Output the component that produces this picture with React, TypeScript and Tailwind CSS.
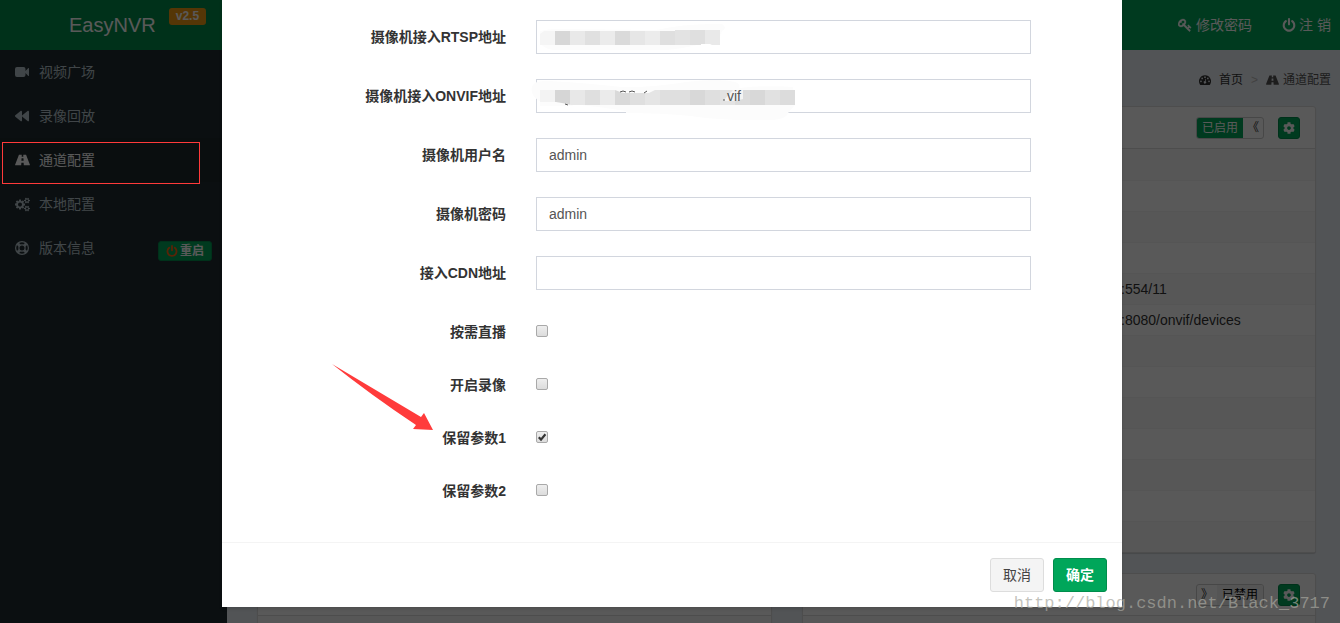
import type { ReactNode } from "react";
import { FaBackward, FaCog } from "react-icons/fa";

function Glyph({ className, box, children }: { className: string; box: string; children: ReactNode }) {
  return (
    <svg viewBox={box} fill="currentColor" className={className} aria-hidden="true">
      {children}
    </svg>
  );
}

function KeyIcon({ className }: { className: string }) {
  return (
    <Glyph className={className} box="0 0 1792 1792">
      <path
        stroke="currentColor"
        strokeWidth="40"
        d="M832 512q0-80-56-136t-136-56-136 56-56 136q0 42 19 83-41-19-83-19-80 0-136 56t-56 136 56 136 136 56 136-56 56-136q0-42-19-83 41 19 83 19 80 0 136-56t56-136zm851 704q0 17-49 66t-66 49q-9 0-28.5-16t-36.5-33-38.5-40-24.5-26l-96 96 220 220q28 28 28 68 0 42-39 81t-81 39q-40 0-68-28l-671-671q-176 131-365 131-163 0-265.5-102.5t-102.5-265.5q0-160 95-313t248-248 313-95q163 0 265.5 102.5t102.5 265.5q0 189-131 365l355 355 96-96q-3-3-26-24.5t-40-38.5-33-36.5-16-28.5q0-17 49-66t66-49q13 0 23 10 6 6 46 44.5t82 79.5 86.5 86 73 78 28.5 41z"
      />
    </Glyph>
  );
}

function PowerIcon({ className }: { className: string }) {
  return (
    <Glyph className={className} box="128 0 1536 1700">
      <path d="M1664 896q0 156-61 298t-164 245-245 164-298 61-298-61-245-164-164-245-61-298q0-182 80.5-343t226.5-270q43-32 95.5-25t83.5 50q32 42 24.5 94.500t-49.5 84.500q-98 74-151.5 181t-53.5 228q0 104 40.5 198.500t109.500 163.500 163.500 109.500 198.500 40.500 198.500-40.500 163.500-109.500 109.500-163.500 40.500-198.500q0-121-53.500-228t-151.500-181q-42-32-49.500-84.500t24.500-94.500q31-43 84-50t95 25q146 109 226.500 270t80.500 343zm-640-768v640q0 52-38 90t-90 38-90-38-38-90v-640q0-52 38-90t90-38 90 38 38 90z" />
    </Glyph>
  );
}

function CogsIcon({ className }: { className: string }) {
  return (
    <Glyph className={className} box="0 0 1920 1792">
      <path d="M896 896q0-106-75-181t-181-75-181 75-75 181 75 181 181 75 181-75 75-181zm768 512q0-52-38-90t-90-38-90 38-38 90q0 53 37.5 90.5t90.5 37.5 90.5-37.5 37.5-90.5zm0-1024q0-52-38-90t-90-38-90 38-38 90q0 53 37.5 90.5t90.5 37.5 90.5-37.5 37.5-90.5zm-384 421v185q0 10-7 19.5t-16 10.5l-155 24q-11 35-32 76 34 48 90 115 7 11 7 20 0 12-7 19-23 30-82.5 89.5t-78.5 59.5q-11 0-21-7l-115-90q-37 19-77 31-11 108-23 155-7 24-30 24h-186q-11 0-20-7.5t-10-17.5l-23-153q-34-10-75-31l-118 89q-7 7-20 7-11 0-21-8-144-133-144-160 0-9 7-19 10-14 41-53t47-61q-23-44-35-82l-152-24q-10-1-17-9.5t-7-19.5v-185q0-10 7-19.5t16-10.5l155-24q11-35 32-76-34-48-90-115-7-11-7-20 0-12 7-20 22-30 82-89t79-59q11 0 21 7l115 90q34-18 77-32 11-108 23-154 7-24 30-24h186q11 0 20 7.5t10 17.5l23 153q34 10 75 31l118-89q8-7 20-7 11 0 21 8 144 133 144 160 0 8-7 19-12 16-42 54t-45 60q23 48 34 82l152 23q10 2 17 10.5t7 19.5zm640 533v140q0 16-149 31-12 27-30 52 51 113 51 138 0 4-4 7-122 71-124 71-8 0-46-47t-52-68q-20 2-30 2t-30-2q-14 21-52 68t-46 47q-2 0-124-71-4-3-4-7 0-25 51-138-18-25-30-52-149-15-149-31v-140q0-16 149-31 13-29 30-52-51-113-51-138 0-4 4-7 4-2 35-20t59-34 30-16q8 0 46 46.5t52 67.5q20-2 30-2t30 2q51-71 92-112l6-2q4 0 124 70 4 3 4 7 0 25-51 138 17 23 30 52 149 15 149 31zm0-1024v140q0 16-149 31-12 27-30 52 51 113 51 138 0 4-4 7-122 71-124 71-8 0-46-47t-52-68q-20 2-30 2t-30-2q-14 21-52 68t-46 47q-2 0-124-71-4-3-4-7 0-25 51-138-18-25-30-52-149-15-149-31v-140q0-16 149-31 13-29 30-52-51-113-51-138 0-4 4-7 4-2 35-20t59-34 30-16q8 0 46 46.5t52 67.5q20-2 30-2t30 2q51-71 92-112l6-2q4 0 124 70 4 3 4 7 0 25-51 138 17 23 30 52 149 15 149 31z" />
    </Glyph>
  );
}

function VideoIcon({ className }: { className: string }) {
  return (
    <Glyph className={className} box="0 0 14 14">
      <path d="M2 2h6.500q2 0 2 2v2L13.300 3q.7-.3.7.4v7.200q0 .7-.7.4L10.500 8v2q0 2-2 2H2q-2 0-2-2V4q0-2 2-2z" />
    </Glyph>
  );
}

function RoadIcon({ className }: { className: string }) {
  return (
    <Glyph className={className} box="0 0 16 14">
      <path fillRule="evenodd" d="M4.200 1.500H7.200L7.100 3.500H8.900L8.800 1.500H11.800L15.900 12q.2.700-.5.700H9.400L9.200 9.800H6.800L6.600 12.700H.6q-.7 0-.5-.7zM7 5L6.800 7.800H9.200L9 5z" />
    </Glyph>
  );
}

function LifeRingIcon({ className }: { className: string }) {
  return (
    <svg viewBox="0 0 14 14" fill="none" stroke="currentColor" className={className} aria-hidden="true">
      <circle cx="7" cy="7" r="6.400" strokeWidth="1.200" />
      <circle cx="7" cy="7" r="3.100" strokeWidth="1.200" />
      <path strokeWidth="3" d="M2.300 2.300L4.700 4.700M11.700 2.300L9.300 4.700M2.300 11.700L4.700 9.300M11.700 11.700L9.300 9.300" />
    </svg>
  );
}

function DashboardIcon({ className }: { className: string }) {
  return (
    <svg viewBox="0 0 14 14" className={className} aria-hidden="true">
      <path fill="currentColor" d="M7 1.500A7 7 0 0 0 1.200 12.400Q1.400 12.700 1.800 12.700H12.200Q12.600 12.700 12.800 12.400A7 7 0 0 0 7 1.500z" />
      <g fill="#ecf0f5">
        <circle cx="2.300" cy="8.500" r="1" />
        <circle cx="3.700" cy="5.200" r="1" />
        <circle cx="7" cy="3.700" r="1" />
        <circle cx="10.300" cy="5.200" r="1" />
        <circle cx="11.700" cy="8.500" r="1" />
        <path d="M7.600 5.500L8.300 5.700L7.700 8.500A1.500 1.500 0 1 1 6.900 8.300z" />
      </g>
    </svg>
  );
}

const menu: { label: string; icon: ReactNode; active?: boolean; restart?: boolean }[] = [
  { label: "视频广场", icon: <VideoIcon className="size-[14px]" /> },
  { label: "录像回放", icon: <FaBackward className="size-[14px]" /> },
  { label: "通道配置", icon: <RoadIcon className="h-[14px] w-[15px]" />, active: true },
  { label: "本地配置", icon: <CogsIcon className="size-[15px]" /> },
  { label: "版本信息", icon: <LifeRingIcon className="size-[14px]" />, restart: true },
];

function Sidebar() {
  return (
    <aside className="w-[227px] shrink-0 bg-[#222d32]">
      <div className="flex h-[50px] items-start bg-[#008d4c] pl-[69px] text-white">
        <span className="text-[20px] leading-[50px]">EasyNVR</span>
        <span className="mt-2 ml-[13px] rounded-[3px] bg-[#f39c12] px-[7px] text-[12px] leading-[17px] font-bold">v2.5</span>
      </div>
      <nav>
        <ul>
          {menu.map((item) => (
            <li
              key={item.label}
              className={`flex h-11 items-center justify-between pr-[15px] ${item.active ? "bg-[#1e282c] text-white" : "text-[#b8c7ce]"}`}
            >
              <a href="#" className="flex h-11 items-center pl-[15px] text-[14px]">
                <span className="w-6">{item.icon}</span>
                {item.label}
              </a>
              {item.restart && (
                <button className="mt-[5px] flex h-5 items-center gap-[2px] rounded-[3px] border border-[#008d4c] bg-[#00a65a] px-[7px] text-[12px] font-bold text-white">
                  <PowerIcon className="size-[12px] text-[#ff6414]" />
                  重启
                </button>
              )}
            </li>
          ))}
        </ul>
      </nav>
    </aside>
  );
}

function ChannelCard({ enabled, rows }: { enabled: boolean; rows: string[] }) {
  return (
    <section className="rounded-[3px] border border-[#ddd] bg-white shadow-[0_1px_1px_rgba(0,0,0,0.15)]">
      <div className="flex h-[42px] items-center justify-end gap-[14px] border-b border-[#ddd] pr-[15px]">
        {enabled ? (
          <button className="flex h-[22px] w-[68px] overflow-hidden rounded-[3px] border border-[#ccc] text-[12px] leading-5">
            <span className="w-[46px] shrink-0 bg-[#00a65a] text-center text-white">已启用</span>
            <span className="w-5 text-center text-[#333]">《</span>
          </button>
        ) : (
          <button className="flex h-[22px] w-[68px] overflow-hidden rounded-[3px] border border-[#ccc] text-[12px] leading-5">
            <span className="w-5 shrink-0 text-center text-[#333]">》</span>
            <span className="w-[46px] shrink-0 bg-[#f4f4f4] text-center text-black">已禁用</span>
          </button>
        )}
        <button aria-label="设置" className="flex size-[22px] items-center justify-center rounded-[3px] border border-[#008d4c] bg-[#00a65a] text-white">
          <FaCog className="size-[12px]" />
        </button>
      </div>
      <table className="w-full">
        <tbody>
          {rows.map((row, i) => (
            <tr key={i} className="h-[31px] border-b border-[#f4f4f4] last:border-0 odd:bg-[#f9f9f9]">
              <td />
              <td className="w-[194px] text-[14px] leading-5 text-[#333]">{row}</td>
            </tr>
          ))}
        </tbody>
      </table>
    </section>
  );
}

const blank = Array<string>(13).fill("");
const details = blank.map((text, i) => (i === 4 ? ":554/11" : i === 5 ? ":8080/onvif/devices" : text));

function Page() {
  return (
    <div className="flex min-h-screen">
      <Sidebar />
      <div className="min-w-0 flex-1 bg-[#ecf0f5]">
        <header className="flex h-[50px] items-center justify-end gap-[30px] bg-[#00a65a] pr-[9px] text-[14px] text-white">
          <a href="#" className="flex items-center gap-1">
            <KeyIcon className="size-[14px]" />
            修改密码
          </a>
          <a href="#" className="flex items-center gap-[3px]">
            <PowerIcon className="size-[14px]" />
            注 销
          </a>
        </header>
        <nav className="flex h-14 items-center justify-end pt-1 pr-[9px] text-[12px] text-[#333]">
          <a href="#" className="flex items-center gap-2">
            <DashboardIcon className="size-[12px]" />
            首页
          </a>
          <span className="px-2 text-[#bbb]">&gt;</span>
          <a href="#" className="flex items-center gap-1 text-[#555]">
            <RoadIcon className="h-[12px] w-[13px]" />
            通道配置
          </a>
        </nav>
        <main className="grid grid-cols-2 gap-x-[30px] gap-y-5 pr-6 pl-[30px]">
          <ChannelCard enabled rows={blank} />
          <ChannelCard enabled rows={details} />
          <ChannelCard enabled={false} rows={blank} />
          <ChannelCard enabled={false} rows={blank} />
        </main>
      </div>
    </div>
  );
}

const maskA = ["#f5f5f5", "#d7d7d7", "#e9e9e9", "#e0e0e0", "#ebebeb", "#dadada", "#e6e6e6", "#ececec", "#dfdfdf", "#e3e3e3", "#dfdfdf", "#e9e9e9"];
const maskB = ["#f3f3f3", "#d6d6d6", "#e8e8e8", "#dfdfdf", "#ebebeb", "#d9d9d9", "#dfdfdf", "#e5e5e5", "#dfdfdf", "#dfdfdf", "#d8d8d8", "#dfdfdf", "#e3e3e3", "#dcdcdc", "#d8d8d8", "#e1e1e1", "#dcdcdc"];

function RtspMask() {
  return (
    <svg width="200" height="34" className="pointer-events-none absolute top-0 left-0" aria-hidden="true">
      <path d="M4 12Q5 10 18 9L120 10Q150 3 186 4Q192 8 186 11L180 24H165Q145 29 130 30L18 30Q4 28 4 20Z" fill="#fcfcfc" />
      {maskA.map((c, i) => (
        <rect key={i} x={4 + i * 15} y={i > 8 ? 10 : 11} width="15" height={i > 8 ? 15 : 14} fill={c} />
      ))}
      <path d="M4 11h4l-4 3z" fill="#fcfcfc" />
      <path d="M165 25v-1h9l2 1z" fill="#fff" />
    </svg>
  );
}

function OnvifMask() {
  return (
    <svg width="276" height="46" className="pointer-events-none absolute top-0 -left-[5px]" aria-hidden="true">
      <path d="M1 8Q2 2 14 2Q45 3 90 8Q120 9 155 3Q188 -1 204 3Q210 5 208 9Q240 6 262 8L264 26L257 34Q256 40 240 41Q190 42 160 37Q130 34 95 34V32Q70 28 50 26L8 22Q-1 16 1 8Z" fill="#fcfcfc" />
      {maskB.map((c, i) => (
        <rect key={i} x={9 + i * 15} y="11" width="15" height="15" fill={c} />
      ))}
      <path d="M9 23L25 23Q38 25 43 27H9Z" fill="#fcfcfc" />
      <path d="M84 11H124L118 14H92Z" fill="#fcfcfc" />
      <path d="M89 13q3-2 6 0M98 13q3-2 6 0M113 14l3-2M34 25l3 1" fill="none" stroke="#555" />
      <path d="M192 22L202 11H212V20L204 22Z" fill="#f4f4f4" />
      <text x="196" y="22" fontSize="14" fill="#555">vif</text>
      <path d="M192 21h2" stroke="#555" />
    </svg>
  );
}

const fields: { id: string; label: string; value: string; mask?: ReactNode }[] = [
  { id: "rtsp", label: "摄像机接入RTSP地址", value: "", mask: <RtspMask /> },
  { id: "onvif", label: "摄像机接入ONVIF地址", value: "", mask: <OnvifMask /> },
  { id: "user", label: "摄像机用户名", value: "admin" },
  { id: "password", label: "摄像机密码", value: "admin" },
  { id: "cdn", label: "接入CDN地址", value: "" },
];

const options = [
  { id: "live", label: "按需直播", checked: false },
  { id: "record", label: "开启录像", checked: false },
  { id: "reserve1", label: "保留参数1", checked: true },
  { id: "reserve2", label: "保留参数2", checked: false },
];

function ChannelDialog() {
  return (
    <form role="dialog" className="w-[900px] max-w-full bg-white shadow-[0_2px_3px_rgba(0,0,0,0.125)]" onSubmit={(e) => e.preventDefault()}>
      <div className="flex flex-col gap-[25px] pt-5 pb-10">
        {fields.map((f) => (
          <div key={f.id} className="grid grid-cols-12">
            <label htmlFor={f.id} className="col-span-4 pt-[7px] pr-4 text-right text-[14px] leading-5 font-bold text-[#333]">
              {f.label}
            </label>
            <div className="col-span-7 pr-4 pl-[14px]">
              <div className="relative">
                <input
                  id={f.id}
                  type="text"
                  defaultValue={f.value}
                  className="block h-[34px] w-full border border-[#d2d6de] bg-white px-3 text-[14px] text-[#555] outline-none"
                />
                {f.mask}
              </div>
            </div>
          </div>
        ))}
        {options.map((o) => (
          <div key={o.id} className="grid h-7 grid-cols-12">
            <label htmlFor={o.id} className="col-span-4 pt-[7px] pr-4 text-right text-[14px] leading-5 font-bold text-[#333]">
              {o.label}
            </label>
            <div className="col-span-7 pt-[10px] pl-[14px]">
              <div className="relative size-[12px]">
                <input
                  id={o.id}
                  type="checkbox"
                  defaultChecked={o.checked}
                  className="peer block size-[12px] appearance-none rounded-[2px] border border-[#a9a9a9] bg-linear-to-b from-[#eee] to-[#dcdcdc]"
                />
                <svg viewBox="0 0 12 12" className="pointer-events-none absolute inset-0 hidden size-[12px] peer-checked:block" aria-hidden="true">
                  <path d="M2.8 6.2L5 8.6L9.4 3.2" fill="none" stroke="#333" strokeWidth="2.2" />
                </svg>
              </div>
            </div>
          </div>
        ))}
      </div>
      <div className="flex justify-end gap-[9px] border-t border-[#f4f4f4] p-[15px] text-[14px]">
        <button type="button" className="h-[34px] rounded-[3px] border border-[#ddd] bg-[#f4f4f4] px-3 text-[#444]">取消</button>
        <button type="submit" className="h-[34px] rounded-[3px] border border-[#008d4c] bg-[#00a65a] px-3 font-bold text-white">确定</button>
      </div>
    </form>
  );
}

export default function App() {
  return (
    <div className="relative h-screen overflow-hidden font-['Liberation_Sans','Noto_Sans_CJK_SC',sans-serif]">
      <Page />
      <div className="absolute inset-0 flex items-start justify-center bg-black/65 pl-1">
        <ChannelDialog />
      </div>
      <div className="pointer-events-none absolute top-[142px] left-[2px] h-[42px] w-[198px] border border-[#ff3a3a]" />
      <svg width="104" height="68" className="pointer-events-none absolute top-[363px] left-[331px]" aria-hidden="true">
        <path d="M1 1L90 54L93 50L102 67L82 66L85 62Q40 32 1 1Z" fill="#ff3b3b" />
      </svg>
      <p className="pointer-events-none absolute right-[10px] bottom-[8px] font-['Liberation_Mono',monospace] text-[17px] leading-[22px] text-[#a8a8a0]/70">
        http://blog.csdn.net/Black_3717
      </p>
    </div>
  );
}
